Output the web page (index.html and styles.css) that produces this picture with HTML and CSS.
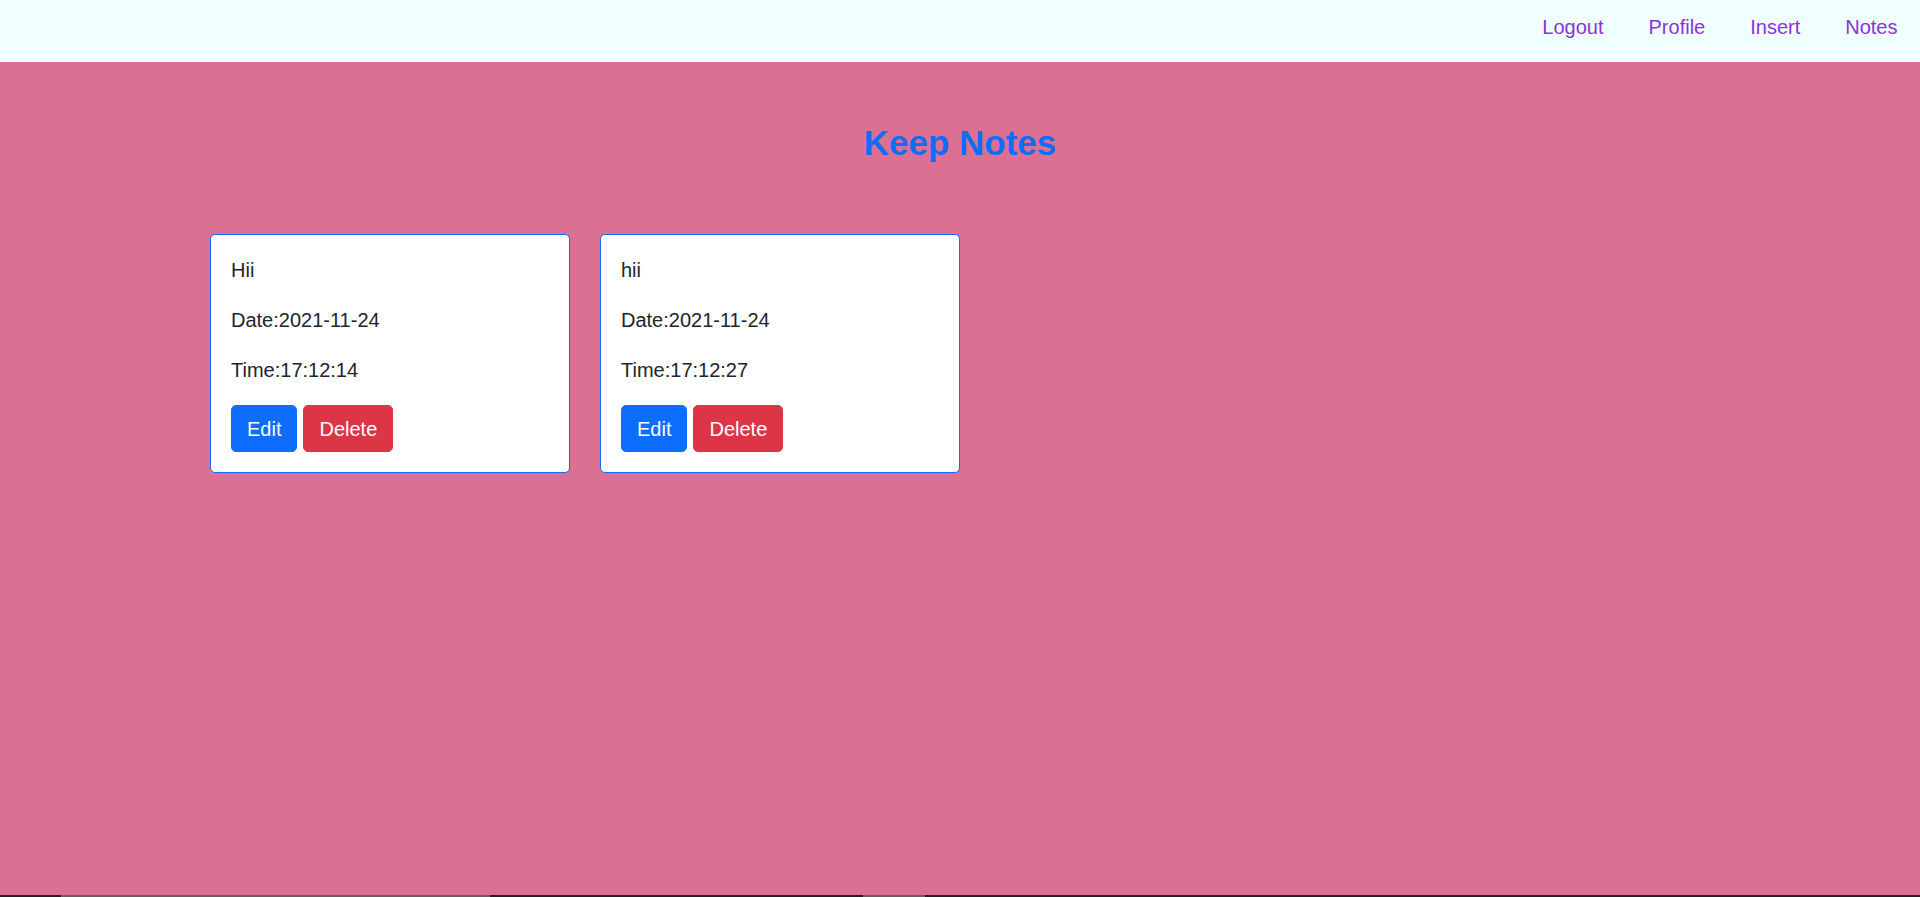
FILE: index.html
```html
<!DOCTYPE html>
<html lang="en">
<head>
<meta charset="utf-8">
<title>Keep Notes</title>
<link rel="stylesheet" href="styles.css">
</head>
<body>
<div class="page">
  <nav class="navbar">
    <ul class="nav-links">
      <li><a class="nav-link" href="#">Logout</a></li>
      <li><a class="nav-link" href="#">Profile</a></li>
      <li><a class="nav-link" href="#">Insert</a></li>
      <li><a class="nav-link" href="#">Notes</a></li>
    </ul>
  </nav>
  <main class="main">
    <h3 class="title">Keep Notes</h3>
    <div class="cards">
      <div class="card">
        <p class="card-text">Hii</p>
        <p class="card-text">Date:2021-11-24</p>
        <p class="card-text">Time:17:12:14</p>
        <div class="actions"><a class="btn btn-primary" href="#">Edit</a> <a class="btn btn-danger" href="#">Delete</a></div>
      </div>
      <div class="card">
        <p class="card-text">hii</p>
        <p class="card-text">Date:2021-11-24</p>
        <p class="card-text">Time:17:12:27</p>
        <div class="actions"><a class="btn btn-primary" href="#">Edit</a> <a class="btn btn-danger" href="#">Delete</a></div>
      </div>
    </div>
  </main>
  <div class="bottom-strip">
    <span class="seg seg-a"></span>
    <span class="seg seg-b"></span>
  </div>
</div>
</body>
</html>
```
FILE: styles.css
```css
* { box-sizing: border-box; }
html, body { margin: 0; padding: 0; }
body {
  font-family: "Liberation Sans", Arial, sans-serif;
  font-size: 20px;
  line-height: 1.5;
  color: #212529;
  background: #db7093;
}
.page {
  min-height: 100vh;
  display: flex;
  flex-direction: column;
}
.navbar {
  height: 62px;
  background: #f0ffff;
  padding-top: 12px;
}
.nav-links {
  list-style: none;
  margin: 0;
  padding: 0;
  display: flex;
  justify-content: flex-end;
}
.nav-link {
  display: block;
  padding: 0 22.5px;
  line-height: 30px;
  color: #8a33d8;
  text-decoration: none;
}
.main {
  flex: 1;
}
.title {
  margin: 60px 0 0;
  text-align: center;
  font-size: 35px;
  font-weight: 700;
  line-height: 42px;
  color: #0d6efd;
}
.cards {
  display: flex;
  gap: 30px;
  padding-left: 210px;
  margin-top: 70px;
}
.card {
  width: 360px;
  background: #fff;
  border: 1px solid #0d6efd;
  border-radius: 5px;
  padding: 20px;
}
.card-text {
  margin: 0 0 20px;
  line-height: 30px;
}
.actions {
  display: flex;
  gap: 6px;
}
.btn {
  display: inline-block;
  padding: 7.5px 15px;
  line-height: 30px;
  font-size: 20px;
  border: 1px solid transparent;
  border-radius: 5px;
  color: #fff;
  text-decoration: none;
}
.btn-primary { background: #0d6efd; border-color: #0d6efd; }
.btn-danger { background: #dc3545; border-color: #dc3545; }
.bottom-strip {
  height: 2px;
  background: #2a1c24;
  position: relative;
}
.seg {
  position: absolute;
  top: 0;
  height: 2px;
  background: #6e5c64;
}
.seg-a { left: 61px; width: 429px; }
.seg-b { left: 863px; width: 62px; }
```
